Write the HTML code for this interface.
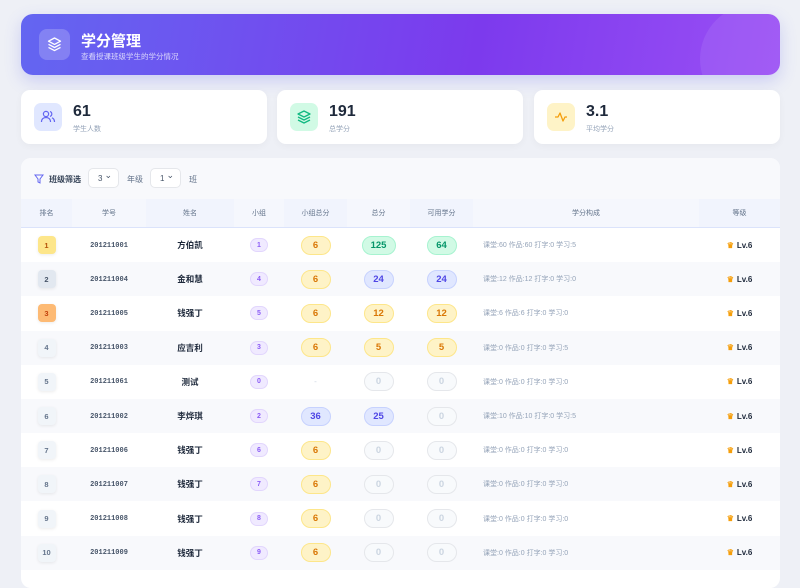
<!DOCTYPE html>
<html><head><meta charset="utf-8"><style>
*{box-sizing:border-box;margin:0;padding:0}
body{width:800px;height:574px;overflow:hidden;background:#eef0f6;font-family:"Liberation Sans","Noto Sans CJK SC",sans-serif;position:relative}
.hdr{position:absolute;left:21px;top:14px;width:759px;height:61px;border-radius:12px;background:linear-gradient(100deg,#6366f1 0%,#7c3aed 60%,#9a4ff5 100%);box-shadow:0 6px 16px rgba(99,102,241,.25);overflow:hidden}
.hdr .ic{position:absolute;left:18px;top:15px;width:31px;height:31px;border-radius:8px;background:rgba(255,255,255,.2)}
.hdr h1{position:absolute;left:60px;top:16px;color:#fff;font-size:15px;font-weight:bold}
.hdr p{position:absolute;left:60px;top:37px;color:rgba(255,255,255,.75);font-size:7.5px}
.circ{position:absolute;right:-30px;top:-10px;width:110px;height:110px;border-radius:50%;background:rgba(255,255,255,.08)}
.card{position:absolute;top:90px;width:246px;height:54px;background:#fff;border-radius:9px;box-shadow:0 2px 8px rgba(0,0,0,.04)}
.card .i{position:absolute;left:13px;top:13px;width:28px;height:28px;border-radius:7px}
.card b{position:absolute;left:52px;top:13px;font-size:16px;color:#1e293b}
.card span{position:absolute;left:52px;top:34px;font-size:7px;color:#94a3b8}
.tbl{position:absolute;left:21px;top:158px;width:759px;height:430px;background:#fff;border-radius:10px;overflow:hidden}
.flt{height:41px;background:#f8f9fc;position:relative;font-size:8px;color:#64748b}
.sel{position:absolute;top:10px;width:31px;height:20px;border:1px solid #e5e7eb;border-radius:5px;background:#fff;font-size:8px;color:#475569;padding:5px 0 0 9px}
.sel:after{content:"⌄";position:absolute;right:6px;top:1px;font-size:9px}
.row{position:absolute;left:0;width:759px;height:34px}
.c{position:absolute;top:0;height:100%;display:flex;align-items:center;justify-content:center}
.th{font-size:7px;color:#64748b;background:#f1f4fd}
.rk{width:18px;height:18px;border-radius:4px;font-size:7.5px;font-weight:bold;display:flex;align-items:center;justify-content:center;color:#64748b;background:#f1f5f9;box-shadow:0 1px 3px rgba(0,0,0,.08)}
.id{font-family:"Liberation Mono",monospace;font-size:7px;color:#475569;font-weight:bold;padding-top:1px}
.nm{font-size:8.5px;color:#1e293b;font-weight:bold}
.g{width:18px;height:14px;border-radius:7px;background:#f0eaff;border:1px solid #e2d6fd;color:#8b5cf6;font-size:7px;font-weight:bold;display:flex;align-items:center;justify-content:center}
.p{height:19px;border-radius:10px;font-size:9.5px;font-weight:bold;display:flex;align-items:center;justify-content:center}
.y{background:#fef3c7;border:1px solid #fde68a;color:#d97706}
.gr{background:#d1fae5;border:1px solid #a7f3d0;color:#059669}
.b{background:#e0e7ff;border:1px solid #c7d2fe;color:#4f46e5}
.z{background:#f8fafc;border:1px solid #e5e7eb;color:#cbd5e1}
.cm{font-size:7px;color:#94a3b8;justify-content:flex-start;padding-left:10px}
.lv{font-size:8px;font-weight:bold;color:#1e293b}
</style></head><body>
<div class="hdr"><div class="circ"></div><div class="ic"><svg width="31" height="31" viewBox="0 0 31 31" fill="none" stroke="#fff" stroke-width="1.3" stroke-linejoin="round"><path d="M15.5 9l-6 3.2 6 3.2 6-3.2z"/><path d="M9.5 15.3l6 3.2 6-3.2"/><path d="M9.5 18.4l6 3.2 6-3.2"/></svg></div><h1>学分管理</h1><p>查看授课班级学生的学分情况</p></div>
<div class="card" style="left:21px"><div class="i" style="background:#e0e7ff"><svg width="28" height="28" viewBox="0 0 28 28" fill="none" stroke="#6366f1" stroke-width="1.2"><circle cx="12" cy="11" r="2.6"/><path d="M7.5 19c0-3 2-4.5 4.5-4.5s4.5 1.5 4.5 4.5"/><path d="M16 8.6a2.5 2.5 0 010 4.8M18 14.8c1.5.6 2.5 2 2.5 4.2"/></svg></div><b>61</b><span>学生人数</span></div>
<div class="card" style="left:277px"><div class="i" style="background:#d1fae5"><svg width="28" height="28" viewBox="0 0 28 28" fill="none" stroke="#10b981" stroke-width="1.3" stroke-linejoin="round"><path d="M14 8l-6 3 6 3 6-3z"/><path d="M8 14l6 3 6-3"/><path d="M8 17l6 3 6-3"/></svg></div><b>191</b><span>总学分</span></div>
<div class="card" style="left:534px"><div class="i" style="background:#fef3c7"><svg width="28" height="28" viewBox="0 0 28 28" fill="none" stroke="#f59e0b" stroke-width="1.3" stroke-linejoin="round"><path d="M8 14h3l2-4 3 8 2-4h2"/></svg></div><b>3.1</b><span>平均学分</span></div>
<div class="tbl">
<div class="flt"><svg style="position:absolute;left:13px;top:16px" width="10" height="10" viewBox="0 0 10 10" fill="none" stroke="#6366f1" stroke-width="1"><path d="M1 1h8L6 5v4L4 8V5z"/></svg><span style="position:absolute;left:28px;top:16px;color:#334155;font-weight:bold">班级筛选</span><div class="sel" style="left:67px">3</div><span style="position:absolute;left:106px;top:16px">年级</span><div class="sel" style="left:129px">1</div><span style="position:absolute;left:168px;top:16px">班</span></div>
<div class="row th" style="top:41px;height:29px;border-bottom:1px solid #dbe3fb">
<div class="c" style="left:0;width:51px">排名</div><div class="c" style="left:51px;width:74px;background:#f5f7fd">学号</div><div class="c" style="left:125px;width:88px">姓名</div><div class="c" style="left:213px;width:50px;background:#f5f7fd">小组</div><div class="c" style="left:263px;width:63px">小组总分</div><div class="c" style="left:326px;width:63px;background:#f5f7fd">总分</div><div class="c" style="left:389px;width:63px">可用学分</div><div class="c" style="left:452px;width:226px;background:#f5f7fd">学分构成</div><div class="c" style="left:678px;width:81px">等级</div></div>
<div id="rows"></div>
</div>
<script>
var d=[["1","201211001","方伯凯","1","6y","125gr","64gr","课堂:60 作品:60 打字:0 学习:5","#fde68a","#b45309"],
["2","201211004","金和慧","4","6y","24b","24b","课堂:12 作品:12 打字:0 学习:0","#e2e8f0","#475569"],
["3","201211005","钱强丁","5","6y","12y","12y","课堂:6 作品:6 打字:0 学习:0","#fdba74","#c2410c"],
["4","201211003","应吉利","3","6y","5y","5y","课堂:0 作品:0 打字:0 学习:5"],
["5","201211061","测试","0","-","0z","0z","课堂:0 作品:0 打字:0 学习:0"],
["6","201211002","李烨琪","2","36b","25b","0z","课堂:10 作品:10 打字:0 学习:5"],
["7","201211006","钱强丁","6","6y","0z","0z","课堂:0 作品:0 打字:0 学习:0"],
["8","201211007","钱强丁","7","6y","0z","0z","课堂:0 作品:0 打字:0 学习:0"],
["9","201211008","钱强丁","8","6y","0z","0z","课堂:0 作品:0 打字:0 学习:0"],
["10","201211009","钱强丁","9","6y","0z","0z","课堂:0 作品:0 打字:0 学习:0"]];
function pill(v,w){if(v=="-")return '<span style="color:#cbd5e1;font-size:8px">-</span>';var m=v.match(/^(\d+)(\w+)$/);return '<div class="p '+m[2]+'" style="width:'+w+'px">'+m[1]+'</div>';}
var h="";d.forEach(function(r,i){var t=70+i*34.2;h+='<div class="row" style="top:'+t+'px;background:'+(i%2?'#f8f9fc':'#fff')+'">'+
'<div class="c" style="left:0;width:51px"><div class="rk" style="'+(r[8]?'background:'+r[8]+';color:'+r[9]:'')+'">'+r[0]+'</div></div>'+
'<div class="c id" style="left:51px;width:74px">'+r[1]+'</div>'+
'<div class="c nm" style="left:125px;width:88px">'+r[2]+'</div>'+
'<div class="c" style="left:213px;width:50px"><div class="g">'+r[3]+'</div></div>'+
'<div class="c" style="left:263px;width:63px">'+pill(r[4],30)+'</div>'+
'<div class="c" style="left:326px;width:63px">'+pill(r[5],r[5].length>4?34:30)+'</div>'+
'<div class="c" style="left:389px;width:63px">'+pill(r[6],30)+'</div>'+
'<div class="c cm" style="left:452px;width:226px">'+r[7]+'</div>'+
'<div class="c lv" style="left:678px;width:81px"><span style="color:#f59e0b;font-size:8px;margin-right:3px">♛</span>Lv.6</div></div>';});
document.getElementById("rows").innerHTML=h;
</script>
</body></html>
